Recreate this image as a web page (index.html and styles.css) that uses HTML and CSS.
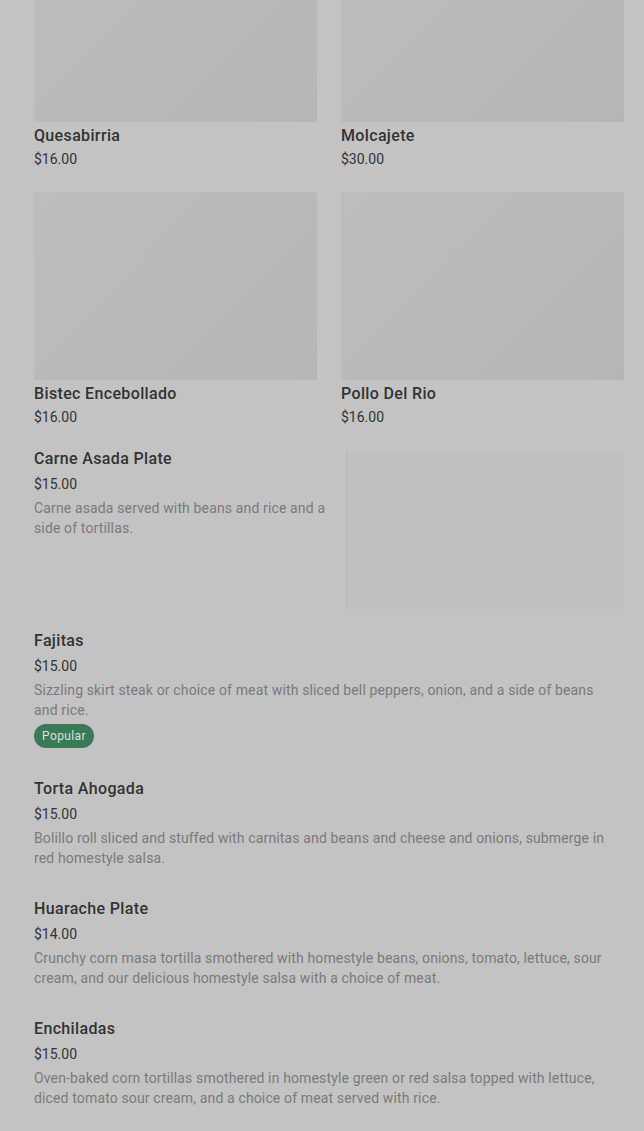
FILE: index.html
```html
<!DOCTYPE html>
<html>
<head>
<meta charset="utf-8">
<link rel="stylesheet" href="styles.css">
</head>
<body>
<main class="menu">
  <section class="grid">
    <div class="card">
      <div class="thumb"></div>
      <div class="name">Quesabirria</div>
      <div class="price">$16.00</div>
    </div>
    <div class="card">
      <div class="thumb"></div>
      <div class="name">Molcajete</div>
      <div class="price">$30.00</div>
    </div>
    <div class="card">
      <div class="thumb"></div>
      <div class="name">Bistec Encebollado</div>
      <div class="price">$16.00</div>
    </div>
    <div class="card">
      <div class="thumb"></div>
      <div class="name">Pollo Del Rio</div>
      <div class="price">$16.00</div>
    </div>
  </section>

  <section class="list">
    <article class="item item-media">
      <div class="item-text">
        <div class="name">Carne Asada Plate</div>
        <div class="price">$15.00</div>
        <p class="desc">Carne asada served with beans and rice and a side of tortillas.</p>
      </div>
      <div class="item-img"></div>
    </article>

    <article class="item">
      <div class="name">Fajitas</div>
      <div class="price">$15.00</div>
      <p class="desc">Sizzling skirt steak or choice of meat with sliced bell peppers, onion, and a side of beans and rice.</p>
      <span class="badge">Popular</span>
    </article>

    <article class="item">
      <div class="name">Torta Ahogada</div>
      <div class="price">$15.00</div>
      <p class="desc">Bolillo roll sliced and stuffed with carnitas and beans and cheese and onions, submerge in red homestyle salsa.</p>
    </article>

    <article class="item">
      <div class="name">Huarache Plate</div>
      <div class="price">$14.00</div>
      <p class="desc">Crunchy corn masa tortilla smothered with homestyle beans, onions, tomato, lettuce, sour cream, and our delicious homestyle salsa with a choice of meat.</p>
    </article>

    <article class="item">
      <div class="name">Enchiladas</div>
      <div class="price">$15.00</div>
      <p class="desc">Oven-baked corn tortillas smothered in homestyle green or red salsa topped with lettuce, diced tomato sour cream, and a choice of meat served with rice.</p>
    </article>
  </section>
</main>
</body>
</html>
```

FILE: styles.css
```css
html, body {
  margin: 0;
  padding: 0;
  background: #c3c3c3;
}
body {
  font-family: Roboto, "Liberation Sans", sans-serif;
  color: #2e2e2e;
  overflow: hidden;
}
.menu {
  padding: 0 20px 40px 34px;
  margin-top: -66px;
}
.grid {
  display: grid;
  grid-template-columns: 283px 283px;
  column-gap: 24px;
  row-gap: 22px;
}
.thumb {
  height: 188px;
  background: linear-gradient(135deg, #bdbdbd 0%, #b6b6b6 100%);
}
.name {
  font-size: 16px;
  font-weight: 500;
  line-height: 24px;
  color: #333;
  letter-spacing: 0.35px;
}
.card .name {
  margin-top: 2px;
}
.price {
  font-size: 14px;
  line-height: 22px;
  color: #333;
}
.list {
  display: flex;
  flex-direction: column;
  margin-top: 19px;
}
.item {
  display: flex;
  flex-direction: column;
  align-items: flex-start;
  margin-bottom: 29px;
  padding-right: 10px;
}
.item .price {
  line-height: 24px;
  margin-top: 1px;
}
.desc {
  margin: 2px 0 0;
  font-size: 14px;
  line-height: 20px;
  color: #7a7a7a;
  letter-spacing: 0.14px;
}
.item-media {
  flex-direction: row;
  align-items: flex-start;
  justify-content: space-between;
  margin-bottom: 21px;
  padding-right: 0;
}
.item-text {
  width: 300px;
}
.item-img {
  width: 276px;
  height: 157px;
  margin-top: 4px;
  background: #c0c0c0;
  box-shadow: -2px 0 1px rgba(0,0,0,0.04), 0 -2px 1px rgba(255,255,255,0.05);
}
.badge {
  margin-top: 4px;
  height: 24px;
  line-height: 24px;
  padding: 0 8px;
  border-radius: 12px;
  background: #3b7a58;
  color: #d3e4d9;
  font-size: 12px;
  letter-spacing: 0.4px;
}
```
